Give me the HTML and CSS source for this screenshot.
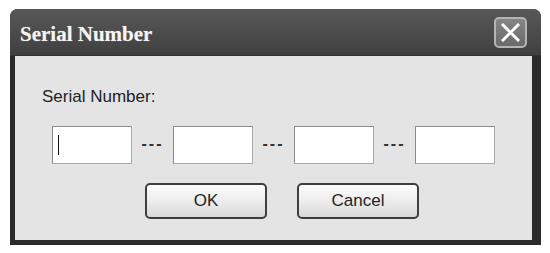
FILE: index.html
```html
<!DOCTYPE html>
<html lang="en">
  <head>
    <meta charset="UTF-8" />
    <title>Serial Number</title>
    <link rel="stylesheet" href="styles.css">
  </head>
  <body>
    <!-- 대화상자 -->
    <div class="dialog">
      <div class="titlebar">
        <span class="title">Serial Number</span>
        <button class="close" type="button">
          <svg width="19" height="19" viewBox="0 0 19 19">
            <path d="M2 2 L17 17 M17 2 L2 17" stroke="#fff" stroke-width="3" stroke-linecap="square" />
          </svg>
        </button>
      </div>
      <div class="body">
        <div class="label">Serial Number:</div>
        <div class="fields">
          <div class="field"><span class="caret"></span></div>
          <span class="dash">---</span>
          <div class="field"></div>
          <span class="dash">---</span>
          <div class="field"></div>
          <span class="dash">---</span>
          <div class="field"></div>
        </div>
        <div class="buttons">
          <button class="btn" type="button">OK</button>
          <button class="btn" type="button">Cancel</button>
        </div>
      </div>
    </div>
  </body>
</html>
```

FILE: styles.css
```css
body {
  margin: 0;
  background: #fff;
  font-family: "Liberation Sans", Arial, sans-serif;
  color: #222;
}

.dialog {
  width: 531px;
  height: 236px;
  margin: 9px 0 0 10px;
  background: #2b2b2b;
  border-radius: 8px 8px 0 0;
  display: flex;
  flex-direction: column;
}

.titlebar {
  height: 46px;
  display: flex;
  align-items: center;
  justify-content: space-between;
  padding: 0 14px 0 10px;
  background: linear-gradient(#585858, #404040);
  border-radius: 8px 8px 0 0;
  border-bottom: 1px solid #333;
}

.title {
  padding-top: 5px;
  font-family: "Liberation Serif", "Times New Roman", serif;
  font-weight: bold;
  font-size: 21px;
  color: #f4f4f4;
  text-shadow: 0 0 1px #999;
}

.close {
  width: 33px;
  height: 31px;
  padding: 0;
  display: flex;
  align-items: center;
  justify-content: center;
  background: linear-gradient(#858585, #6a6a6a);
  border: 2px solid #b4b4b4;
  border-radius: 5px;
}

.body {
  flex: 1;
  margin: 0 9px 5px 5px;
  background: #e4e4e4;
  padding: 31px 0 0 27px;
}

.label {
  font-size: 17px;
  line-height: 20px;
}

.fields {
  display: flex;
  align-items: center;
  margin: 19px 0 0 10px;
}

.field {
  width: 78px;
  height: 36px;
  background: #fff;
  border: 1px solid #8a8a8a;
  border-right-color: #a8a8a8;
  border-bottom-color: #a8a8a8;
  display: flex;
  align-items: center;
}

.caret {
  width: 1px;
  height: 20px;
  margin-left: 5px;
  background: #111;
}

.dash {
  width: 41px;
  margin-top: -3px;
  text-align: center;
  font-size: 16px;
  font-weight: bold;
  letter-spacing: 2px;
  color: #333;
}

.buttons {
  display: flex;
  gap: 30px;
  margin: 19px 0 0 103px;
}

.btn {
  width: 122px;
  height: 36px;
  font-family: "Liberation Sans", Arial, sans-serif;
  font-size: 17px;
  color: #222;
  background: linear-gradient(#fdfdfd, #e9e9e9 60%, #d8d8d8);
  border: 2px solid #3e3e3e;
  border-radius: 5px;
}
```
